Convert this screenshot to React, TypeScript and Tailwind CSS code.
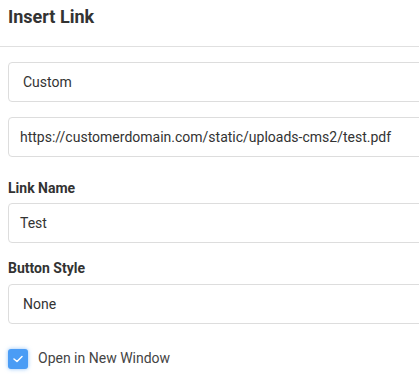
import React from "react";

export default function App() {
  return (
    <div className="w-[419px] h-[386px] overflow-hidden bg-white text-[#333]" style={{ fontFamily: "Roboto, 'Liberation Sans', sans-serif" }}>
      <div className="h-[47px] border-b border-[#e0e0e0] px-2 pt-[5px]">
        <h1 className="text-[18px] leading-[24px] font-bold text-[#333]">Insert Link</h1>
      </div>
      <div className="pl-2 pt-[15px]">
        <div className="w-[440px] h-[40px] border border-[#ddd] rounded-[4px] flex items-center pl-[14px] text-[14px] text-[#333]">Custom</div>
        <div className="mt-[15px] w-[440px] h-[40px] border border-[#ddd] rounded-[4px] flex items-center pl-[11px] text-[14px] text-[#333]">https://customerdomain.com/static/uploads-cms2/test.pdf</div>
        <div className="mt-[21px] text-[14px] leading-[20px] font-bold text-[#333]">Link Name</div>
        <div className="mt-[5px] w-[440px] h-[40px] border border-[#ddd] rounded-[4px] flex items-center pl-[11px] text-[14px] text-[#333]">Test</div>
        <div className="mt-[15px] text-[14px] leading-[20px] font-bold text-[#333]">Button Style</div>
        <div className="mt-[6px] w-[440px] h-[40px] border border-[#ddd] rounded-[4px] flex items-center pl-[14px] text-[14px] text-[#333]">None</div>
        <div className="mt-[24px] flex items-center gap-[10px]">
          <div className="w-[20px] h-[20px] rounded-[3px] bg-[#4a9cf5] shadow-[0_0_4px_rgba(74,156,245,0.6)] flex items-center justify-center">
            <svg width="10" height="8" viewBox="0 0 10 8" fill="none">
              <path d="M1 4 L4 6.5 L9 1.5" stroke="white" strokeWidth="1.5" strokeLinecap="round" strokeLinejoin="round" />
            </svg>
          </div>
          <span className="text-[14px] text-[#444]">Open in New Window</span>
        </div>
      </div>
    </div>
  );
}
